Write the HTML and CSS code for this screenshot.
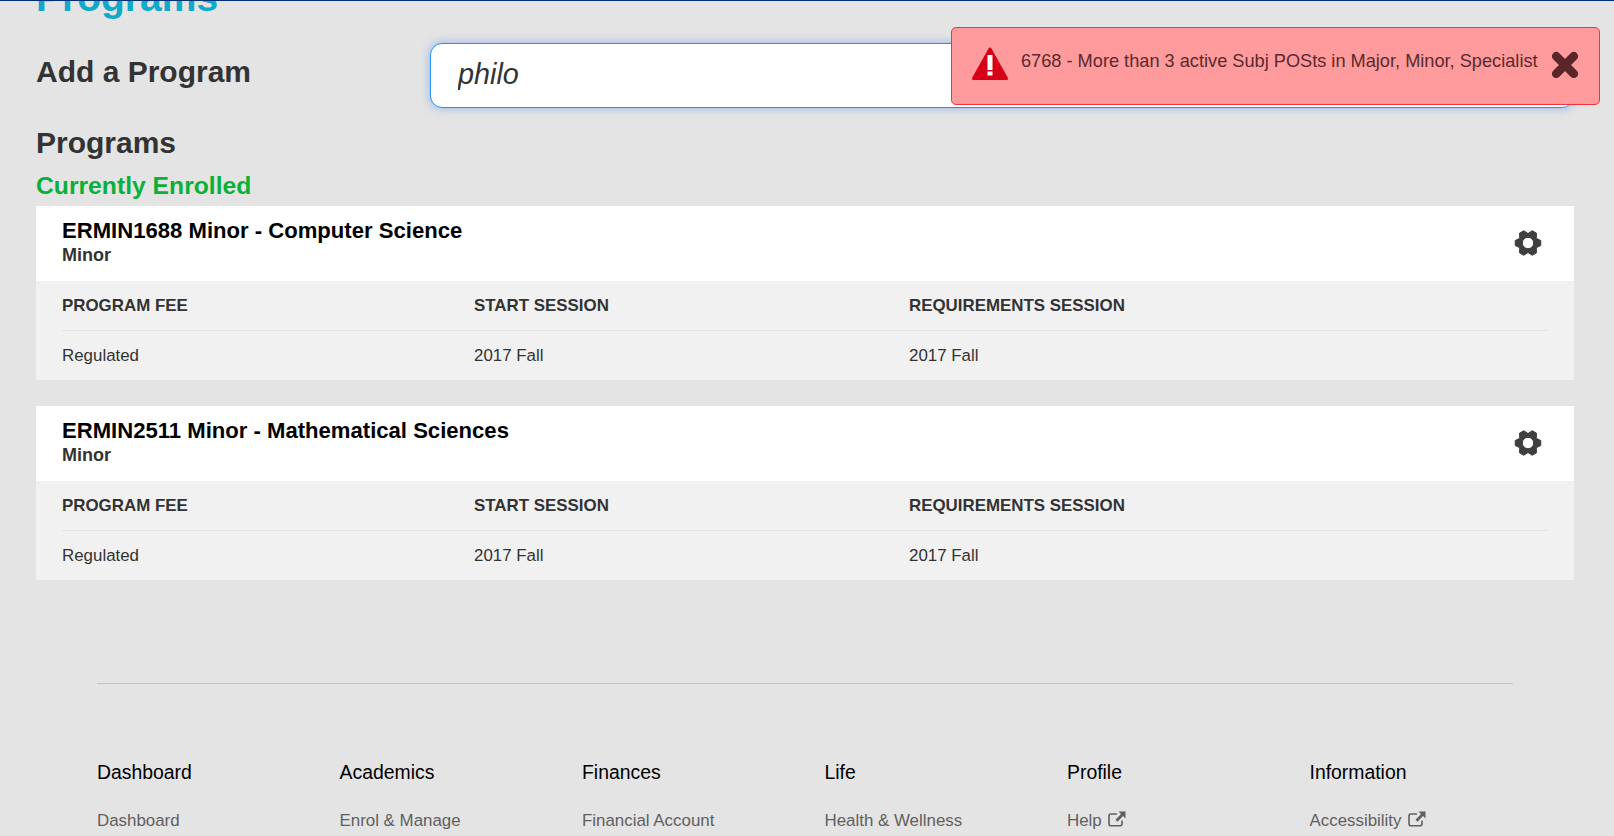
FILE: index.html
```html
<!DOCTYPE html>
<html lang="en">
<head>
  <meta charset="UTF-8">
  <meta name="viewport" content="width=device-width, initial-scale=1.0">
  <title>Programs</title>
  <link rel="stylesheet" href="styles.css">
</head>
<body>
  <div class="topLine"></div>

  <div class="page">
    <h1 class="pageTitle">Programs</h1>

    <div class="addRow">
      <h2 class="sectionTitle addTitle">Add a Program</h2>
      <input class="searchBox" type="text" value="philo" aria-label="Add a Program">
    </div>

    <h2 class="sectionTitle programsTitle">Programs</h2>
    <h3 class="statusTitle">Currently Enrolled</h3>

    <div class="programCard">
      <div class="cardHead">
        <div class="cardText">
          <div class="cardTitle">ERMIN1688 Minor - Computer Science</div>
          <div class="cardType">Minor</div>
        </div>
        <svg class="gear" viewBox="0 0 28 28" aria-hidden="true"><path fill-rule="evenodd" d="M26.760 11.520V16.480L22.230 18.750 22.530 23.810 18.230 26.290 14 23.500 9.770 26.290 5.470 23.810 5.770 18.750 1.240 16.480V11.520L5.770 9.250 5.470 4.190 9.770 1.710 14 4.500 18.230 1.710 22.530 4.190 22.230 9.250ZM14 8.300a5.700 5.700 0 1 0 0 11.400 5.700 5.700 0 0 0 0-11.400Z"/></svg>
      </div>
      <div class="cardBody">
        <div class="infoRow infoLabels">
          <span>PROGRAM FEE</span>
          <span>START SESSION</span>
          <span>REQUIREMENTS SESSION</span>
        </div>
        <div class="infoRow infoValues">
          <span>Regulated</span>
          <span>2017 Fall</span>
          <span>2017 Fall</span>
        </div>
      </div>
    </div>

    <div class="programCard">
      <div class="cardHead">
        <div class="cardText">
          <div class="cardTitle">ERMIN2511 Minor - Mathematical Sciences</div>
          <div class="cardType">Minor</div>
        </div>
        <svg class="gear" viewBox="0 0 28 28" aria-hidden="true"><path fill-rule="evenodd" d="M26.760 11.520V16.480L22.230 18.750 22.530 23.810 18.230 26.290 14 23.500 9.770 26.290 5.470 23.810 5.770 18.750 1.240 16.480V11.520L5.770 9.250 5.470 4.190 9.770 1.710 14 4.500 18.230 1.710 22.530 4.190 22.230 9.250ZM14 8.300a5.700 5.700 0 1 0 0 11.400 5.700 5.700 0 0 0 0-11.400Z"/></svg>
      </div>
      <div class="cardBody">
        <div class="infoRow infoLabels">
          <span>PROGRAM FEE</span>
          <span>START SESSION</span>
          <span>REQUIREMENTS SESSION</span>
        </div>
        <div class="infoRow infoValues">
          <span>Regulated</span>
          <span>2017 Fall</span>
          <span>2017 Fall</span>
        </div>
      </div>
    </div>

    <div class="footer">
      <div class="footerCol">
        <div class="footerHead">Dashboard</div>
        <a class="footerLink">Dashboard</a>
      </div>
      <div class="footerCol">
        <div class="footerHead">Academics</div>
        <a class="footerLink">Enrol &amp; Manage</a>
      </div>
      <div class="footerCol">
        <div class="footerHead">Finances</div>
        <a class="footerLink">Financial Account</a>
      </div>
      <div class="footerCol">
        <div class="footerHead">Life</div>
        <a class="footerLink">Health &amp; Wellness</a>
      </div>
      <div class="footerCol">
        <div class="footerHead">Profile</div>
        <a class="footerLink">Help
          <svg class="extIcon" viewBox="0 0 18 16" aria-hidden="true"><path d="M14 9.500v3.300a2 2 0 0 1-2 2H3a2 2 0 0 1-2-2V5a2 2 0 0 1 2-2h6" fill="none" stroke="#5f5f5f" stroke-width="1.600"/><path d="M10.500 0.500H17.500V7.500L15 5l-5.500 5.700-2-2L13 3z" fill="#5f5f5f"/></svg>
        </a>
      </div>
      <div class="footerCol">
        <div class="footerHead">Information</div>
        <a class="footerLink">Accessibility
          <svg class="extIcon" viewBox="0 0 18 16" aria-hidden="true"><path d="M14 9.500v3.300a2 2 0 0 1-2 2H3a2 2 0 0 1-2-2V5a2 2 0 0 1 2-2h6" fill="none" stroke="#5f5f5f" stroke-width="1.600"/><path d="M10.500 0.500H17.500V7.500L15 5l-5.500 5.700-2-2L13 3z" fill="#5f5f5f"/></svg>
        </a>
      </div>
    </div>
  </div>

  <div class="toast">
    <svg class="toastWarn" viewBox="0 0 36 33" aria-hidden="true">
      <path d="M18 2 L34.500 31.500 H1.500 Z" fill="#d60017" stroke="#d60017" stroke-width="3" stroke-linejoin="round"/>
      <rect x="15.500" y="8" width="5" height="15" fill="#ffffff"/>
      <rect x="15.500" y="24.500" width="5" height="4" fill="#ffffff"/>
    </svg>
    <span class="toastText">6768 - More than 3 active Subj POSts in Major, Minor, Specialist</span>
    <svg class="toastClose" viewBox="0 0 24 24" aria-hidden="true">
      <path d="M4.500 4.500 L19.500 19.500 M19.500 4.500 L4.500 19.500" stroke="#5a2528" stroke-width="7.500" stroke-linecap="round"/>
    </svg>
  </div>
</body>
</html>
```

FILE: styles.css
```css
html, body {
  height: 836px;
  overflow: hidden;
}

body {
  font-family: "Liberation Sans", Arial, sans-serif;
  background-color: #e4e4e4;
  color: #333;
  margin: 0;
  padding: 0;
}

.topLine {
  height: 1px;
  background-color: #00307a;
}

.page {
  height: 835px;
  overflow: hidden;
  padding: 0 40px 0 36px;
}

.pageTitle {
  font-size: 39px;
  line-height: 44px;
  color: #0fa9c9;
  margin: -25px 0 0;
}

.addRow {
  display: flex;
  align-items: center;
  justify-content: space-between;
  margin-top: 23px;
}

.sectionTitle {
  font-size: 30px;
  line-height: 36px;
  color: #333;
  margin: 0;
}

.addTitle {
  margin-bottom: 8px;
}

.searchBox {
  width: 1144px;
  height: 65px;
  box-sizing: border-box;
  border: 1px solid #2b90ee;
  border-radius: 12px;
  background-color: #fff;
  box-shadow: 0 0 10px rgba(60, 130, 240, 0.5);
  padding: 0 27px 2px;
  font-family: inherit;
  font-size: 28.8px;
  font-style: italic;
  color: #333;
  outline: none;
}

.programsTitle {
  margin-top: 17px;
}

.statusTitle {
  font-size: 24.7px;
  line-height: 28px;
  color: #0bb039;
  margin: 11px 0 0;
}

.programCard {
  margin-bottom: 26px;
}

.statusTitle + .programCard {
  margin-top: 6px;
}

.cardHead {
  display: flex;
  justify-content: space-between;
  align-items: center;
  height: 75px;
  box-sizing: border-box;
  background-color: #fff;
  padding: 0 32px 2px 26px;
}

.cardText {
  margin-bottom: 2px;
}

.cardTitle {
  font-size: 22.1px;
  line-height: 26px;
  font-weight: bold;
  color: #000;
}

.cardType {
  font-size: 18px;
  line-height: 22px;
  font-weight: bold;
  color: #333;
}

.gear {
  width: 28px;
  height: 28px;
  fill: #3f3f3f;
  stroke: #3f3f3f;
  stroke-linejoin: round;
}

.cardBody {
  background-color: #f1f1f1;
  padding: 0 26px;
  height: 99px;
}

.infoRow {
  display: grid;
  grid-template-columns: 412px 435px 1fr;
  font-size: 16.9px;
}

.infoLabels {
  font-weight: bold;
  height: 49px;
  line-height: 50px;
  border-bottom: 1px solid #e4e4e4;
}

.infoValues {
  line-height: 50px;
}

.footer {
  display: grid;
  grid-template-columns: repeat(6, 242.5px);
  margin: 103px 61px 0 61px;
  border-top: 1px solid #c4c4c4;
  padding-top: 76px;
}

.footerHead {
  font-size: 19.4px;
  line-height: 24px;
  color: #000;
  margin-bottom: 25px;
}

.footerLink {
  font-size: 16.9px;
  line-height: 24px;
  color: #5f5f5f;
  display: block;
}

.extIcon {
  width: 18px;
  height: 16px;
  margin-left: 2px;
  vertical-align: -1px;
}

.toast {
  position: absolute;
  top: 27px;
  left: 951px;
  width: 649px;
  height: 78px;
  box-sizing: border-box;
  display: flex;
  align-items: center;
  background-color: #ff9a9d;
  border: 1px solid #f2323f;
  border-radius: 5px;
  color: #5a2a2e;
}

.toastWarn {
  width: 36px;
  height: 33px;
  margin-left: 20px;
  margin-top: -5px;
  flex-shrink: 0;
}

.toastText {
  font-size: 18.2px;
  margin-left: 13px;
  margin-top: -9px;
  white-space: nowrap;
}

.toastClose {
  width: 28px;
  height: 28px;
  margin-left: 13px;
  margin-top: -3px;
  flex-shrink: 0;
}
```
